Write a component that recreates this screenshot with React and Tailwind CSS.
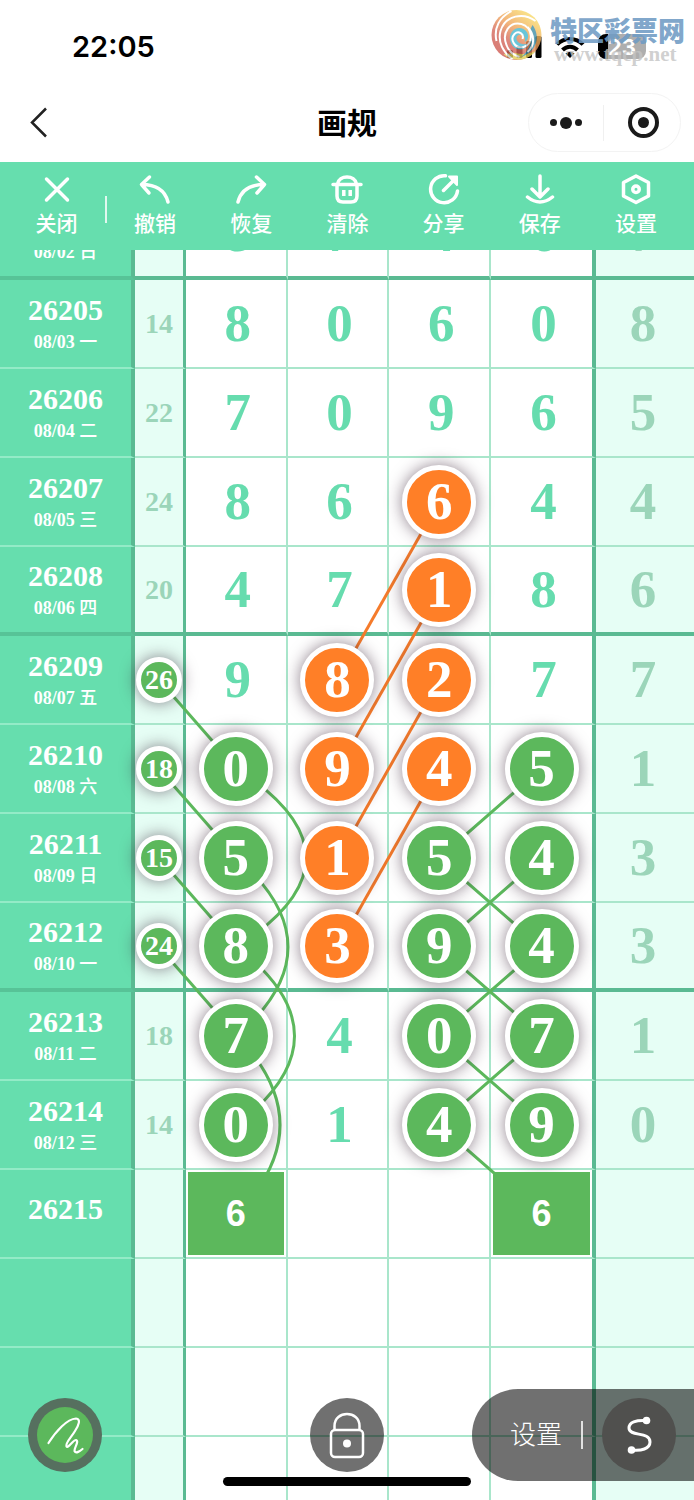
import React, { useState } from "react";
import clsx from "clsx";

// marks: "g" green circle, "o" orange circle, "p" predicted square
const rows = [
  { issue: "", date: "08/02", day: "日", sum: "", nums: ["8", "7", "4", "6"], last: "7", thick: true },
  { issue: "26205", date: "08/03", day: "一", sum: "14", nums: ["8", "0", "6", "0"], last: "8" },
  { issue: "26206", date: "08/04", day: "二", sum: "22", nums: ["7", "0", "9", "6"], last: "5" },
  { issue: "26207", date: "08/05", day: "三", sum: "24", nums: ["8", "6", "6", "4"], marks: "--o-", last: "4" },
  { issue: "26208", date: "08/06", day: "四", sum: "20", nums: ["4", "7", "1", "8"], marks: "--o-", last: "6", thick: true },
  { issue: "26209", date: "08/07", day: "五", sum: "26", nums: ["9", "8", "2", "7"], marks: "-oo-", last: "7", sumMark: true },
  { issue: "26210", date: "08/08", day: "六", sum: "18", nums: ["0", "9", "4", "5"], marks: "goog", last: "1", sumMark: true },
  { issue: "26211", date: "08/09", day: "日", sum: "15", nums: ["5", "1", "5", "4"], marks: "gogg", last: "3", sumMark: true },
  { issue: "26212", date: "08/10", day: "一", sum: "24", nums: ["8", "3", "9", "4"], marks: "gogg", last: "3", sumMark: true, thick: true },
  { issue: "26213", date: "08/11", day: "二", sum: "18", nums: ["7", "4", "0", "7"], marks: "g-gg", last: "1" },
  { issue: "26214", date: "08/12", day: "三", sum: "14", nums: ["0", "1", "4", "9"], marks: "g-gg", last: "0" },
  { issue: "26215", sum: "", nums: ["6", "", "", "6"], marks: "p--p", last: "" },
  { issue: "", sum: "", nums: ["", "", "", ""], last: "" },
  { issue: "", sum: "", nums: ["", "", "", ""], last: "" },
  { issue: "", sum: "", nums: ["", "", "", ""], last: "" },
];

// one row is 89 units high, row centres are at 89 * i + 44
const greenLines = [
  "M159 489L237 578",
  "M159 578L237 667",
  "M159 667L237 756",
  "M159 756L237 845",
  "M237 578Q375 667 237 756",
  "M237 667Q339 756 237 845",
  "M237 756Q352 845 237 934",
  "M237 845Q323 934 237 1023",
  "M541 578L439 667L541 756L439 845L541 934",
  "M541 667L439 756L541 845L439 934L541 1023",
];

const orangeLines = [
  "M439 311L338 489",
  "M439 400L338 578",
  "M439 489L338 667",
  "M439 578L338 756",
];

const tools = [
  {
    label: "撤销",
    icon: <path d="M10.5 4L2.5 11.5L10 20M2.5 11.5C16 11.5 26 17 29 29" />,
  },
  {
    label: "恢复",
    icon: <path d="M21.5 4L29.5 11.5L22 20M29.5 11.5C16 11.5 6 17 3 29" />,
  },
  {
    label: "清除",
    icon: (
      <>
        <path d="M2 11.5H30M6.500 11C8 1.500 24 1.500 25.500 11M6 12V23Q6 29 12 29H20Q26 29 26 23V12" />
        <path d="M12.800 17V23M19.200 17V23" strokeLinecap="butt" />
      </>
    ),
  },
  {
    label: "分享",
    icon: (
      <>
        <path d="M17.500 2.800A13.500 13.500 0 1 0 29.500 18M15.500 17.500L27 6" />
        <path d="M21 3.500H29V12Z" fill="currentColor" strokeWidth="2" />
      </>
    ),
  },
  {
    label: "保存",
    icon: <path d="M16 3V23M8 16L16 24L24 16M3.500 24Q16 34 28.500 24" />,
  },
  {
    label: "设置",
    icon: (
      <>
        <path d="M16 3L28.500 9.500V23L16 29.500L3.500 23V9.500Z" />
        <circle cx="16" cy="16.250" r="3.250" />
      </>
    ),
  },
];

const StatusBar = () => (
  <div className="relative flex h-[93px] shrink-0 items-center justify-between pl-[72px] pr-12">
    <span className="text-[29px] leading-8 font-semibold text-black">22:05</span>
    <div className="flex items-center gap-3 text-black">
      <svg className="h-6 w-9" viewBox="0 0 36 24" fill="currentColor">
        <rect x="1" y="15" width="6" height="8" rx="1.500" />
        <rect x="10.500" y="11" width="6" height="12" rx="1.500" />
        <rect x="20" y="6" width="6" height="17" rx="1.500" />
        <rect x="29.500" y="1" width="6" height="22" rx="1.500" />
      </svg>
      <svg className="h-6 w-8" viewBox="0 0 32 24" fill="none" stroke="currentColor" strokeWidth="4">
        <path d="M3 9.500C10 2 22 2 29 9.500" />
        <path d="M8.500 15C13 10.500 19 10.500 23.500 15" />
        <path d="M16 23L11.500 18.500Q16 15 20.500 18.500Z" fill="currentColor" stroke="none" />
      </svg>
      <div className="flex h-[25px] w-12 items-center justify-center rounded-lg bg-linear-to-r from-black from-20% to-[#aeaeae] to-20% text-[22px] leading-6 font-bold text-white">
        23
      </div>
    </div>

    {/* site watermark */}
    <div className="absolute top-[9px] right-[10px] flex gap-2">
      <svg className="h-[52px] w-[51px] opacity-80" viewBox="0 0 50 52">
        <defs>
          <linearGradient id="ball" x1="0.8" y1="0.1" x2="0.2" y2="0.9">
            <stop offset="0" stopColor="#f9dc6a" />
            <stop offset="0.4" stopColor="#f0a45c" />
            <stop offset="0.7" stopColor="#d5685c" />
            <stop offset="1" stopColor="#cf5a52" />
          </linearGradient>
        </defs>
        <circle cx="25" cy="26" r="25" fill="url(#ball)" />
        <path d="M12 45C20 53 36 53 44 42C38 45 30 46 24 44Z" fill="#e2cf55" />
        <path d="M41 16C49 27 46 42 30 48C38 41 42 31 38 22Z" fill="#3f8fa8" />
        <path d="M37 35C33 43 22 42 19 33C16 24 24 16 32 20C38 23 38 31 33 33C35 28 31 24 27 26C22 29 26 37 37 35Z" fill="#45b9d0" />
        <path
          d="M31 30C33 25 27 21 23 25C18 30 23 40 32 38C43 35 41 18 30 15C18 12 10 24 15 36C17 42 22 46 28 48M44 12C32 3 14 6 9 22C6 33 12 44 21 50M20 2C8 8 2 19 5 32M36 18C43 25 44 36 36 43"
          fill="none"
          stroke="#fff"
          strokeWidth="2"
        />
      </svg>
      <div className="flex w-[134px] flex-col">
        <span className="text-[27px] leading-[45px] font-black whitespace-nowrap text-[#6f9bc4]/90">特区彩票网</span>
        <span className="-mt-2 pl-1 font-['Liberation_Serif',serif] text-[21px] leading-4 font-bold text-[#c4c4c4]/80">
          www.tqcp.net
        </span>
      </div>
    </div>
  </div>
);

const NavBar = () => (
  <div className="grid h-[69px] shrink-0 grid-cols-[1fr_auto_1fr] items-start">
    <button type="button" aria-label="返回" className="mt-[14px] ml-7 h-8 w-6 text-[#222]">
      <svg className="h-8 w-6" viewBox="0 0 24 32" fill="none" stroke="currentColor" strokeWidth="2.5">
        <path d="M18 1.500L4 15.500L18 29.500" />
      </svg>
    </button>
    <h1 className="text-[30px] leading-[60px] font-bold text-black">画规</h1>
    <div className="mr-[13px] flex h-[59px] w-[153px] items-center justify-self-end rounded-full border border-[#f3f3f3]">
      <button type="button" aria-label="更多" className="flex flex-1 items-center justify-center gap-[3px]">
        <span className="size-[7px] rounded-full bg-[#1a1a1a]" />
        <span className="size-3 rounded-full bg-[#1a1a1a]" />
        <span className="size-[7px] rounded-full bg-[#1a1a1a]" />
      </button>
      <span className="h-9 w-px bg-[#f0f0f0]" />
      <button type="button" aria-label="关闭小程序" className="flex flex-1 justify-center pl-0.5">
        <span className="flex size-[31px] items-center justify-center rounded-full border-4 border-[#1a1a1a]">
          <span className="size-[11px] rounded-full bg-[#1a1a1a]" />
        </span>
      </button>
    </div>
  </div>
);

const ToolButton = ({ label, className, children }) => (
  <button type="button" className={clsx("flex flex-col items-center gap-[3px] pt-[11px]", className)}>
    <svg
      className="size-8"
      viewBox="0 0 32 32"
      fill="none"
      stroke="currentColor"
      strokeWidth="3.5"
      strokeLinecap="round"
      strokeLinejoin="round"
    >
      {children}
    </svg>
    <span className="text-[21px] leading-8 font-medium">{label}</span>
  </button>
);

const Toolbar = () => (
  <div className="relative z-30 flex h-[88px] shrink-0 bg-[#66deae] pr-[10px] text-white">
    <ToolButton label="关闭" className="w-[105px] pl-2">
      <path d="M5.500 6L26.500 27M26.500 6L5.500 27" />
    </ToolButton>
    <span className="mt-[34px] h-[27px] w-0.5 bg-white/80" />
    {tools.map((tool) => (
      <ToolButton key={tool.label} label={tool.label} className="flex-1">
        {tool.icon}
      </ToolButton>
    ))}
  </div>
);

const Ball = ({ value, color, small }) => (
  <span
    className={clsx(
      "relative z-20 mx-auto flex items-center justify-center rounded-full border-[5px] border-white text-white shadow-[0_0_16px_rgba(50,25,45,0.55)]",
      small ? "size-[46px] text-[28px]" : "size-[74px]",
      color === "orange" ? "bg-[#ff7f27]" : "bg-[#5cb85c]"
    )}
  >
    {value}
  </span>
);

const NumberCell = ({ value, mark }) => {
  if (mark === "g") return <Ball value={value} color="green" />;
  if (mark === "o") return <Ball value={value} color="orange" />;
  if (mark === "p") {
    return (
      <span className="relative z-20 mx-0.5 flex h-[83px] items-center justify-center bg-[#5cb85c] font-['Liberation_Sans',sans-serif] text-[36px] text-white">
        {value}
      </span>
    );
  }
  return <span className="pl-1">{value}</span>;
};

const TrendTable = () => (
  <div className="relative -mt-[59px]">
    <table className="w-full table-fixed border-separate border-spacing-0 text-center font-['Liberation_Serif','Noto_Sans_CJK_SC',serif] font-bold">
      <colgroup>
        <col className="w-[135px]" />
        <col className="w-[51px]" />
        <col />
        <col />
        <col />
        <col className="w-[105px]" />
        <col className="w-[98px]" />
      </colgroup>
      <tbody>
        {rows.map((row, i) => {
          const line = row.thick ? "border-b-4 border-b-[#5aba92]" : "border-b-2 border-b-[#a9e6cb]";
          return (
            <tr key={i}>
              <th
                scope="row"
                className={clsx(
                  "h-[89px] border-r-4 border-r-[#5aba92] bg-[#66deae] p-0 text-white",
                  row.thick ? "border-b-4 border-b-[#57c397]" : "border-b-2 border-b-[#93ebc7]"
                )}
              >
                <div className="h-9 text-[30px] leading-9">{row.issue}</div>
                <div className={clsx("text-[18px]", row.date ? "leading-7" : "h-[10px]")}>
                  {row.date} <span className="font-medium">{row.day}</span>
                </div>
              </th>
              <td className={clsx("border-r-[3px] border-r-[#5aba92] bg-[#e6fef5] p-0 text-[28px] text-[#9bd5b9]", line)}>
                {row.sumMark ? <Ball value={row.sum} color="green" small /> : row.sum}
              </td>
              {row.nums.map((num, j) => (
                <td
                  key={j}
                  className={clsx(
                    "bg-white p-0 text-[53px] leading-none text-[#66dcae]",
                    j === 3 ? "border-r-4 border-r-[#5aba92]" : "border-r-2 border-r-[#a9e6cb]",
                    line
                  )}
                >
                  <NumberCell value={num} mark={row.marks?.[j]} />
                </td>
              ))}
              <td className={clsx("bg-[#e6fef5] p-0 pr-1 text-[53px] leading-none text-[#9bd5b9]", line)}>{row.last}</td>
            </tr>
          );
        })}
      </tbody>
    </table>

    {/* drawn links between the marked numbers */}
    <svg
      className="pointer-events-none absolute inset-0 z-10 h-full w-full"
      viewBox="0 0 694 1335"
      preserveAspectRatio="none"
      fill="none"
      strokeWidth="3"
    >
      <g stroke="#5cb85c">
        {greenLines.map((d) => (
          <path key={d} d={d} />
        ))}
      </g>
      <g stroke="#f57b2b">
        {orangeLines.map((d) => (
          <path key={d} d={d} />
        ))}
      </g>
    </svg>
  </div>
);

const BottomControls = ({ locked, onToggleLock }) => (
  <div className="absolute inset-x-0 bottom-[19px] z-30 grid grid-cols-[1fr_auto_1fr] items-center text-white">
    <button
      type="button"
      aria-label="画笔"
      className="ml-7 flex size-[74px] items-center justify-center rounded-full bg-[#56705f]"
    >
      <span className="flex size-14 items-center justify-center rounded-full bg-[#5cb85c]">
        <svg className="size-14" viewBox="0 0 56 56" fill="none" stroke="currentColor" strokeWidth="2.200" strokeLinecap="round" strokeLinejoin="round">
          <path d="M11.500 36C19 24 30 12 39 11.500C44 12 42 18 38 24C34 31 28 36 29.500 39.500C31 42 36 33 39 33C42.500 34 37 41 37.500 44C39 47 43 44 45.500 42" />
        </svg>
      </span>
    </button>

    <button
      type="button"
      aria-label="锁定"
      aria-pressed={locked}
      onClick={onToggleLock}
      className="flex size-[74px] items-center justify-center rounded-full bg-black/56"
    >
      <svg className="h-12 w-9" viewBox="0 0 36 48" fill="none" stroke="currentColor" strokeWidth="2.500">
        <rect x="2" y="19" width="32" height="27" rx="4" />
        <path d="M5.500 19V15C5.500 -1 30.500 -1 30.500 15V19" />
        <circle cx="18" cy="32.500" r="4" fill="currentColor" stroke="none" />
      </svg>
    </button>

    <div className="flex h-[92px] items-center justify-self-end rounded-l-full bg-black/56 pr-[18px] pl-[38px]">
      <button type="button" className="text-[26px] leading-9 font-light">设置</button>
      <span className="mx-[19px] h-7 w-0.5 bg-white/80" />
      <button
        type="button"
        aria-label="曲线"
        className="flex size-[74px] items-center justify-center rounded-full bg-[#50504e]"
      >
        <svg className="h-10 w-7" viewBox="0 0 28 40" fill="none" stroke="currentColor" strokeWidth="3" strokeLinecap="round">
          <path d="M21 5.500C11 5 4 7 4 13C4 22 25 16 25 27C25 34 16 36 7 35" />
          <circle cx="21.500" cy="5.500" r="3.800" fill="currentColor" stroke="none" />
          <circle cx="6.500" cy="35" r="3.800" fill="currentColor" stroke="none" />
        </svg>
      </button>
    </div>
  </div>
);

const App = () => {
  const [locked, setLocked] = useState(true);

  return (
    <div className="relative flex h-screen flex-col overflow-hidden bg-white font-['Inter','Noto_Sans_CJK_SC',sans-serif]">
      <StatusBar />
      <NavBar />
      <Toolbar />
      <main className="min-h-0 flex-1 overflow-hidden">
        <TrendTable />
      </main>
      <BottomControls locked={locked} onToggleLock={() => setLocked(!locked)} />
      <div className="absolute bottom-[14px] left-1/2 z-40 h-[9px] w-[248px] -translate-x-1/2 rounded-full bg-black" />
    </div>
  );
};

export default App;
